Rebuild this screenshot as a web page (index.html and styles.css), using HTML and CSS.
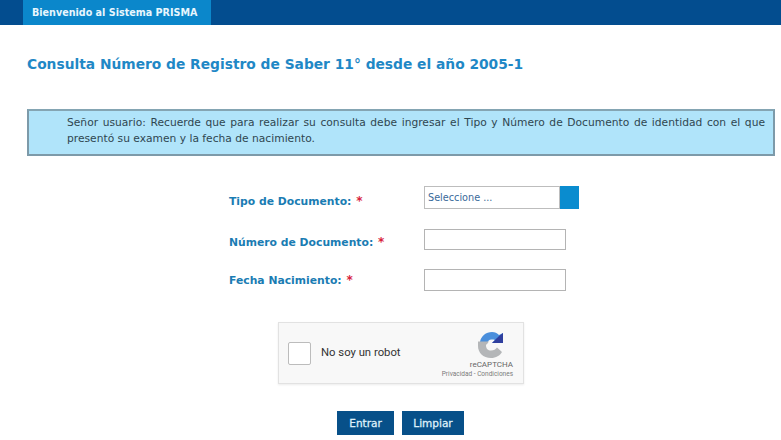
FILE: index.html
```html
<!DOCTYPE html>
<html lang="es">
<head>
<meta charset="utf-8">
<title>Consulta Número de Registro</title>
<link rel="stylesheet" href="styles.css">
</head>
<body>
<header class="topbar"><div class="tab">Bienvenido al Sistema PRISMA</div></header>
<main class="page">
  <h1 class="title">Consulta Número de Registro de Saber 11° desde el año 2005-1</h1>
  <div class="notice">Señor usuario: Recuerde que para realizar su consulta debe ingresar el Tipo y Número de Documento de identidad con el que presentó su examen y la fecha de nacimiento.</div>
  <form class="form">
    <div class="row row-select">
      <span class="label">Tipo de Documento: <b class="req">*</b></span>
      <div class="select"><span class="select-text">Seleccione ...</span><span class="select-btn"></span></div>
    </div>
    <div class="row row-num">
      <span class="label">Número de Documento: <b class="req">*</b></span>
      <div class="input"></div>
    </div>
    <div class="row row-date">
      <span class="label">Fecha Nacimiento: <b class="req">*</b></span>
      <div class="input"></div>
    </div>
    <div class="captcha">
      <span class="check"></span>
      <span class="robot">No soy un robot</span>
      <div class="brand">
        <svg class="logo" width="26" height="26" viewBox="0 0 26 26">
          <path d="M2 10 C3 4 8 0 14 0 C17 0 19 1 21 3 L25 1 L25 11 L14 11 L17 8 C16 7.5 15 7.500 13.500 7.500 C11 7.500 9.500 9 9 12 Z" fill="#4a8fdc"/>
          <path d="M14 11 L25 11 L25 1 L21 4 C20 5 18 7 17 8 Z" fill="#2f3f9e"/>
          <path d="M0 14 L0 9.500 L11 9.500 L8 13 C8 17 10 18.500 13 18.500 C16 18.500 17.500 17.500 19 15.500 L24 20 C22 23.500 18 26 13 26 C5 26 0 20.500 0 14 Z" fill="#b4b6b8"/>
        </svg>
        <span class="brand-name">reCAPTCHA</span>
        <span class="brand-links">Privacidad - Condiciones</span>
      </div>
    </div>
    <div class="actions">
      <button type="button" class="btn btn-enter">Entrar</button>
      <button type="button" class="btn btn-clear">Limpiar</button>
    </div>
  </form>
</main>
</body>
</html>
```

FILE: styles.css
```css
* { box-sizing: border-box; }
html, body { margin: 0; padding: 0; background: #fff; }
body { font-family: "DejaVu Sans", Verdana, sans-serif; height: 440px; overflow: hidden; }
.topbar { height: 25px; background: #034d8f; padding-left: 23px; }
.tab { width: 188px; height: 25px; background: #0b87cb; color: #e8f6fd; font-size: 9.6px; font-weight: bold; line-height: 25px; padding-left: 9px; white-space: nowrap; }
.page { padding: 0 6px 0 27px; }
.title { margin: 0; padding-top: 30px; height: 84px; font-size: 13.8px; line-height: 18px; font-weight: bold; color: #1f88c6; white-space: nowrap; }
.notice { height: 47px; background: #b0e4fa; border: 2px solid #7d9aa9; border-top-color: #84a5b3; padding: 4px 8px 0 38px; font-size: 10.7px; line-height: 16px; color: #2f4650; text-align: justify; }
.form { display: flex; flex-direction: column; padding-top: 30px; }
.row { display: flex; padding-left: 202px; }
.label { width: 195px; font-size: 10.8px; font-weight: bold; color: #1a7cb3; white-space: nowrap; }
.req { color: #d8223c; font-size: 12px; margin-left: 1px; }
.row-select { height: 23px; margin-bottom: 20px; }
.row-select .label { padding-top: 8px; }
.row-num { height: 21px; margin-bottom: 19px; }
.row-num .label { padding-top: 6px; }
.row-date { height: 22px; margin-bottom: 31px; }
.row-date .label { padding-top: 4px; }
.select { display: flex; width: 155px; height: 23px; }
.select-text { flex: 1; border: 1px solid #bdbdbd; background: #fff; color: #3a6a9a; font-size: 9.7px; line-height: 21px; padding-left: 3px; }
.select-btn { width: 19px; background: #0a8ccf; }
.input { width: 142px; height: 100%; border: 1px solid #b4b4b4; background: #fff; }
.captcha { position: relative; align-self: flex-start; margin-left: 251px; width: 246px; height: 62px; background: #f8f8f8; border: 1px solid #e2e2e2; box-shadow: 0 1px 2px rgba(0,0,0,.08); display: flex; align-items: center; padding-left: 9px; }
.check { width: 23px; height: 23px; background: #fff; border: 1px solid #bcbcbc; border-radius: 2px; flex: none; }
.robot { margin-left: 10px; font-family: Roboto, "Liberation Sans", sans-serif; font-size: 11.3px; color: #333; flex: 1; margin-top: -2px; }
.brand { width: 90px; margin-right: 10px; display: flex; flex-direction: column; align-items: flex-end; padding-top: 4px; }
.logo { display: block; margin-right: 9px; }
.brand-name { font-family: Roboto, "Liberation Sans", sans-serif; font-size: 8px; color: #666; line-height: 9px; margin-top: 2px; }
.brand-links { font-family: Roboto, "Liberation Sans", sans-serif; font-size: 6.5px; color: #7a7a7a; line-height: 8px; margin-top: 1px; white-space: nowrap; }
.actions { display: flex; gap: 8px; margin-top: 27px; padding-left: 310px; }
.btn { height: 24px; padding: 0; border: 0; background: #075089; color: #dff0fa; font-family: "DejaVu Sans", Verdana, sans-serif; font-size: 10.5px; font-weight: normal; -webkit-text-stroke: 0.3px #dff0fa; }
.btn-enter { width: 57px; }
.btn-clear { width: 62px; }
```
